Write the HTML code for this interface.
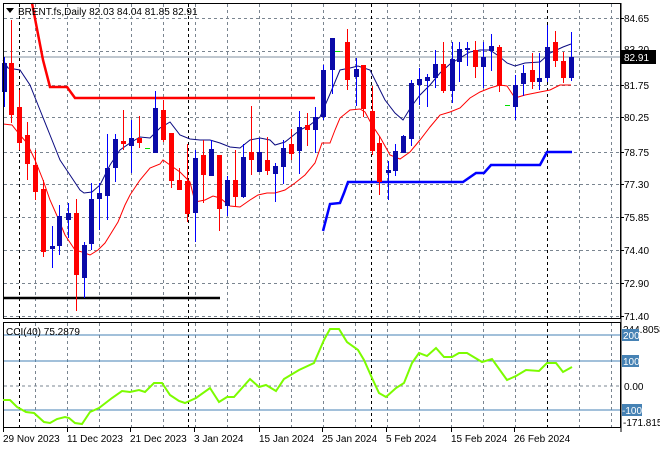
<!DOCTYPE html>
<html><head><meta charset="utf-8"><style>
html,body{margin:0;padding:0;background:#fff;}
svg{display:block;font-family:"Liberation Sans",sans-serif;font-size:10px;}
</style></head><body>
<svg id="s" width="660" height="450" xmlns="http://www.w3.org/2000/svg">
<rect width="660" height="450" fill="#fff"/>
<g id="grid" stroke="#7a8590" stroke-width="1" stroke-dasharray="3,3"></g>
<g id="main"></g>
<line x1="3" y1="57" x2="621" y2="57" stroke="#8090a0"/>
<polyline fill="none" stroke="#0a0a80" stroke-width="1" points="3,60 8,68 20,70 30,85 40,110 50,135 60,160 70,175 80,190 84,193 92,192 100,185 110,165 120,150 130,143 140,137 150,138 160,128 170,122 180,135 190,139 200,140 210,140 220,143 230,147 240,148 250,140 260,138 270,140 275,145 285,142 300,130 310,125 320,117 330,94 340,70 350,68 358,66 370,70 385,100 395,113 403,120 411,107 420,95 430,85 440,73 450,64 460,58 470,52 480,50 490,50 500,57 507,63 515,66 525,63 540,62 550,53 563,47 571,44"/>
<polyline fill="none" stroke="#ff0000" stroke-width="1" points="3,124 12,125 20,135 27,143 35,160 43,180 50,200 58,218 65,235 75,250 82,252 90,255 98,250 105,243 110,235 118,222 125,205 130,195 140,180 150,168 160,164 163,160 170,165 180,172 190,182 195,202 205,200 213,196 220,198 230,206 240,207 250,200 258,195 267,193 275,193 285,190 295,183 305,175 315,163 322,143 330,143 335,130 340,118 350,110 360,109 365,112 372,125 380,137 390,155 400,159 410,152 420,140 430,127 440,115 450,112 460,108 470,98 480,92 490,88 500,85 507,86 515,98 525,95 540,92 550,90 560,85 571,85"/>
<polyline fill="none" stroke="#ff0000" stroke-width="2.5" points="32,3 43,60 50,87 67,87 75,98 315,98"/>
<line x1="3" y1="298" x2="220" y2="298" stroke="#000" stroke-width="2.5"/>
<polyline fill="none" stroke="#0000ff" stroke-width="2.5" points="323,231 330,204 340,203 344,193 348,182 463,182 476,173 484,173 491,165 540,165 547,152 572,152"/>
<g id="cand"></g>
<!-- frames -->
<rect x="3.5" y="3.5" width="617" height="315" fill="none" stroke="#000"/>
<rect x="3.5" y="322.5" width="617" height="105" fill="none" stroke="#000"/>
<line x1="621" y1="3" x2="621" y2="432" stroke="#000"/>
<!-- CCI levels -->
<line x1="4" y1="335" x2="620" y2="335" stroke="#4682b4"/>
<line x1="4" y1="361" x2="620" y2="361" stroke="#4682b4"/>
<line x1="4" y1="386" x2="620" y2="386" stroke="#7a8590" stroke-dasharray="3,3"/>
<line x1="4" y1="410" x2="620" y2="410" stroke="#4682b4"/>
<polyline fill="none" stroke="#7cfc00" stroke-width="2" points="3,400 10,400 17,407 26,412 34,413 44,422 50,423 57,419 65,417 69,418 75,423 82,424 90,412 99,408 112,398 122,391 130,392 139,390 145,392 154,383 162,383 170,395 179,401 185,403 196,398 210,388 219,402 227,397 234,397 250,379 259,387 266,385 276,391 284,379 299,370 314,363 324,340 330,329 339,329 347,342 358,350 364,360 372,378 379,393 386,397 396,388 404,383 412,363 419,353 427,356 436,348 444,357 452,357 459,353 467,353 482,362 492,359 507,380 516,376 526,370 539,371 547,363 556,363 563,372 572,367"/>
<!-- title -->
<path d="M6,8 L14,8 L10,13 Z" fill="#000"/>
<text x="18" y="15" fill="#000">BRENT.fs,Daily  82.03 84.04 81.85 82.91</text>
<text x="6" y="335" fill="#000">CCI(40) 75.2879</text>
<!-- right axis -->
<g id="ax" fill="#000"></g>
<rect x="621" y="50" width="35" height="14" fill="#000"/>
<text x="624" y="61" fill="#fff">82.91</text>
<text x="623" y="333" fill="#000">244.8058</text>
<rect x="622" y="329" width="17" height="12" fill="#4682b4"/><text x="623" y="339" fill="#fff">200</text>
<rect x="622" y="355" width="17" height="12" fill="#4682b4"/><text x="623" y="365" fill="#fff">100</text>
<text x="624" y="390" fill="#000">0.00</text>
<rect x="622" y="404" width="20" height="12" fill="#4682b4"/><text x="622" y="414" fill="#fff">-100</text>
<text x="623" y="426" fill="#000">-171.815</text>
<g id="dates" fill="#000"></g>
</svg>
<script>
var NS="http://www.w3.org/2000/svg";
function el(p,t,a,txt){var e=document.createElementNS(NS,t);for(var k in a)e.setAttribute(k,a[k]);if(txt)e.textContent=txt;document.getElementById(p).appendChild(e);return e;}
var gx=[35,67,99,131,163,195,227,259,291,323,355,387,419,451,483,515,579,611];
var gy=[18,51,85,117,152,184,217,250,283,316];
gx.forEach(function(x){el('grid','line',{x1:x+.5,y1:4,x2:x+.5,y2:318});el('grid','line',{x1:x+.5,y1:323,x2:x+.5,y2:427});});
gy.forEach(function(y){el('grid','line',{x1:4,y1:y+.5,x2:620,y2:y+.5});});
[19,188,371,547].forEach(function(x){
 el('grid','line',{x1:x+.5,y1:4,x2:x+.5,y2:318,stroke:'#000'});
 el('grid','line',{x1:x+.5,y1:323,x2:x+.5,y2:427,stroke:'#000'});});
var lab=["84.65","83.20","81.75","80.25","78.75","77.30","75.85","74.40","72.90","71.40"];
gy.forEach(function(y,i){if(i!=1)el('ax','text',{x:624,y:y+4},lab[i]);else el('ax','text',{x:624,y:y+2},lab[i]);el('ax','line',{x1:621,y1:y+.5,x2:624,y2:y+.5,stroke:'#000'});});
var C=[[4,'b',63,92,57,107],[11,'r',63,115,20,123],[19,'r',107,143,90,150],[27,'r',135,164,122,180],[35,'r',165,192,150,200],[43,'r',189,252,180,257],[52,'b',246,249,226,268],[59,'b',216,246,205,255],[68,'b',213,220,203,238],[76,'r',213,275,199,311],[84,'b',245,278,242,298],[91,'b',199,244,183,250],[99,'b',193,199,183,230],[107,'b',168,196,134,220],[115,'b',139,168,134,182],[123,'r',141,144,110,150],[131,'b',138,146,120,173],[139,'r',138,143,116,148],[147,'g',148],[155,'b',108,153,91,153],[163,'r',110,140,100,142],[171,'r',133,181,133,188],[179,'r',180,190,168,190],[187,'r',181,214,144,222],[195,'b',158,213,150,242],[203,'r',155,175,140,203],[211,'b',149,176,140,176],[219,'r',155,209,155,231],[227,'b',180,206,176,216],[235,'r',180,197,150,206],[243,'b',157,197,144,198],[251,'r',152,160,106,175],[259,'b',152,172,138,172],[267,'r',160,171,137,175],[275,'b',166,174,163,202],[283,'b',148,167,140,184],[291,'r',144,154,129,160],[299,'b',127,151,111,174],[307,'r',125,130,113,146],[315,'b',117,130,107,153],[323,'b',70,117,65,120],[332,'b',38,70,38,94],[337,'g',51],[347,'r',42,80,29,90],[356,'b',69,77,58,106],[363,'r',65,109,65,117],[372,'r',111,151,86,155],[379,'r',143,182,136,195],[388,'b',170,173,161,200],[395,'b',151,171,144,176],[403,'b',136,153,135,153],[411,'b',83,139,80,146],[419,'b',79,85,68,105],[427,'b',77,81,74,107],[435,'b',64,78,50,88],[443,'r',64,91,42,93],[452,'b',59,91,42,103],[459,'b',49,62,42,82],[467,'b',48,49,42,66],[475,'r',50,67,41,78],[483,'b',57,67,42,88],[491,'b',46,51,34,71],[499,'r',47,86,45,92],[507,'g',105],[515,'b',85,107,75,120],[523,'b',73,84,65,96],[532,'r',70,82,53,89],[539,'b',78,82,53,90],[547,'b',47,78,25,82],[555,'r',42,61,31,67],[563,'r',61,78,52,83],[571,'b',57,78,32,81]];
C.forEach(function(c){var x=c[0];
 if(c[1]=='g'){el('cand','line',{x1:x-2,y1:c[2]+.5,x2:x+3,y2:c[2]+.5,stroke:'#00e000'});return;}
 var wc=c[1]=='r'?'#ff0000':'#0000ff',bc=c[1]=='r'?'#ff0000':'#0a0aa8';
 el('cand','line',{x1:x+.5,y1:c[4],x2:x+.5,y2:c[5],stroke:wc});
 el('cand','rect',{x:x-2,y:c[2],width:5,height:Math.max(2,c[3]-c[2]),fill:bc});});
var D=[[3,"29 Nov 2023"],[67,"11 Dec 2023"],[130,"21 Dec 2023"],[194,"3 Jan 2024"],[259,"15 Jan 2024"],[322,"25 Jan 2024"],[386,"5 Feb 2024"],[451,"15 Feb 2024"],[514,"26 Feb 2024"]];
D.forEach(function(d){el('dates','text',{x:d[0],y:442},d[1]);el('dates','line',{x1:d[0]+.5,y1:428,x2:d[0]+.5,y2:432,stroke:'#000'});});
</script>
</body></html>
